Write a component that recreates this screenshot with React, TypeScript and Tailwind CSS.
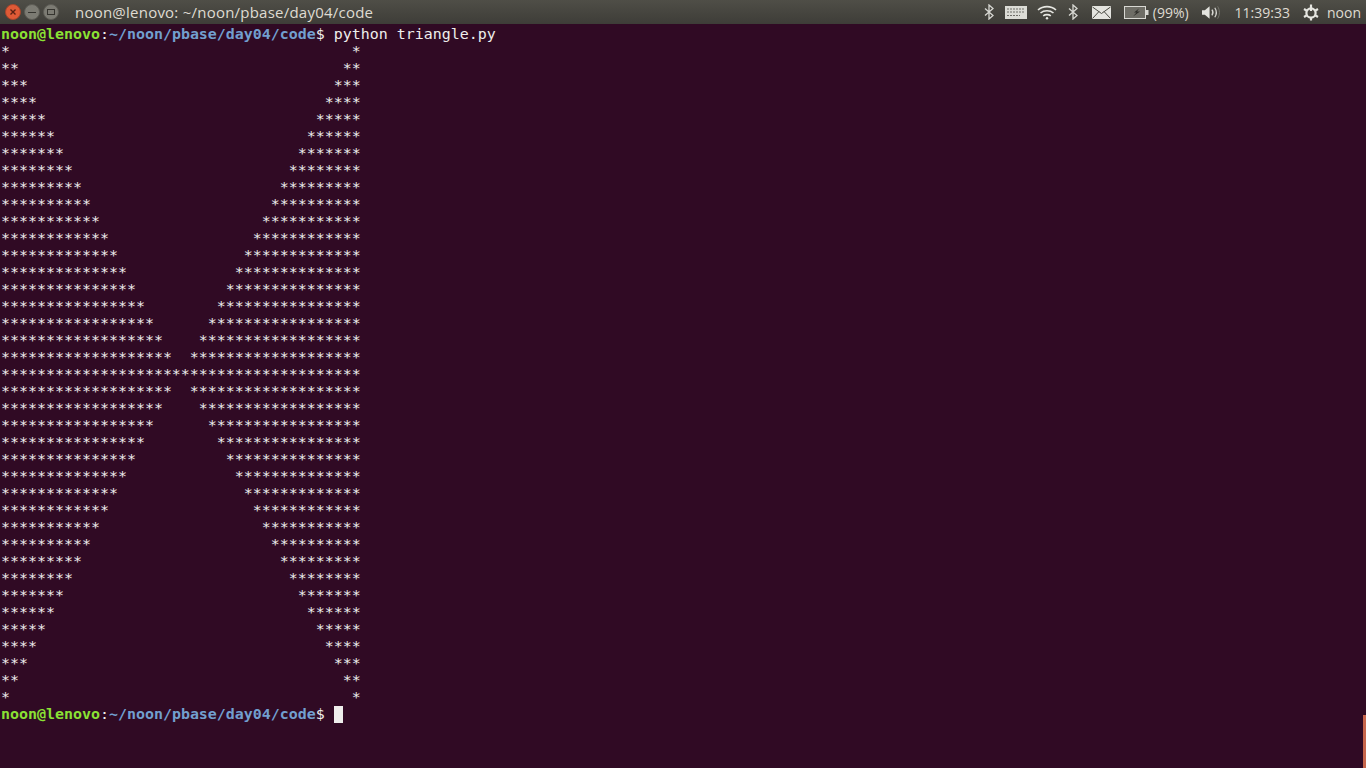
const rowCounts = [...Array.from({ length: 20 }, (_, i) => i + 1), ...Array.from({ length: 19 }, (_, i) => 19 - i)];

function starRow(n: number) {
  return '*'.repeat(n) + ' '.repeat(40 - n * 2) + '*'.repeat(n);
}

function Prompt() {
  return (
    <>
      <span className="font-bold text-[#8ae234]">noon@lenovo</span>
      <span>:</span>
      <span className="font-bold text-[#729fcf]">~/noon/pbase/day04/code</span>
      <span>$ </span>
    </>
  );
}

function WindowButtons() {
  return (
    <div className="flex items-center gap-[3px] pl-[5px] w-[75px]">
      <div className="w-4 h-4 rounded-full bg-[#df5a36] flex items-center justify-center border border-[#a8452c]">
        <svg width="8" height="8" viewBox="0 0 8 8" stroke="#5a2114" strokeWidth="1.4">
          <path d="M1.5 1.5l5 5M6.5 1.5l-5 5" />
        </svg>
      </div>
      <div className="w-4 h-4 rounded-full bg-[#7c7b73] flex items-center justify-center border border-[#5d5c55]">
        <div className="w-2 h-px bg-[#35342f]" />
      </div>
      <div className="w-4 h-4 rounded-full bg-[#7c7b73] flex items-center justify-center border border-[#5d5c55]">
        <div className="w-2 h-[6px] border border-[#35342f]" />
      </div>
    </div>
  );
}

function Bluetooth() {
  return (
    <svg width="10" height="16" viewBox="0 0 10 16" fill="none" stroke="#d8d8d3" strokeWidth="1.3">
      <path d="M1 4.5l8 7-4 3.5V1l4 3.5-8 7" />
    </svg>
  );
}

function Keyboard() {
  return (
    <svg width="22" height="13" viewBox="0 0 22 13">
      <rect x="0" y="0" width="22" height="13" fill="#dcdcd6" />
      <path d="M2 3h18M2 6h18M2 9.500h13" stroke="#6f6e68" strokeWidth="1" strokeDasharray="2 1" />
    </svg>
  );
}

function Wifi() {
  return (
    <svg width="20" height="15" viewBox="0 0 20 15" fill="none" stroke="#e6e6e1" strokeWidth="1.6">
      <path d="M1 5c5-4.500 13-4.500 18 0M3.500 8c3.500-3 9.500-3 13 0M6.200 10.800c2-1.600 5.600-1.600 7.600 0" />
      <circle cx="10" cy="13.300" r="1.200" fill="#e6e6e1" stroke="none" />
    </svg>
  );
}

function Mail() {
  return (
    <svg width="19" height="13" viewBox="0 0 19 13">
      <rect width="19" height="13" fill="#e4e4df" />
      <path d="M0.500 1l9 6.500 9-6.500M0.500 12.500l6.500-7M18.500 12.500l-6.500-7" fill="none" stroke="#4a4942" strokeWidth="1" />
    </svg>
  );
}

function Battery() {
  return (
    <svg width="25" height="13" viewBox="0 0 25 13">
      <rect x="0.500" y="0.500" width="21" height="12" fill="#6e6d66" stroke="#d8d8d3" />
      <rect x="22" y="4" width="2.500" height="5" fill="#d8d8d3" />
      <path d="M15 2.500l-5 4h2.500l-3.500 4 7-5h-3z" fill="#2f2e2a" />
    </svg>
  );
}

function Volume() {
  return (
    <svg width="18" height="15" viewBox="0 0 19 15" fill="none">
      <path d="M0 5h3l5-4v13l-5-4H0z" fill="#e4e4df" />
      <path d="M10.500 4.500c1.300 1.800 1.300 4.200 0 6" stroke="#d8d8d3" strokeWidth="1.400" />
      <path d="M13.500 2.500c2 3 2 7 0 10" stroke="#d8d8d3" strokeWidth="1.300" />
      <path d="M16.500 1c2.500 4 2.500 9 0 13" stroke="#77766e" strokeWidth="1" />
    </svg>
  );
}

function Gear() {
  return (
    <svg width="16" height="17" viewBox="0 0 16 17" fill="none" stroke="#e6e6e1">
      <circle cx="8" cy="9" r="4.600" strokeWidth="2.200" />
      <path d="M8 0.500v6.500" strokeWidth="2.200" />
      <path d="M1 5l2.500 1.500M15 5l-2.500 1.500M1 13l2.500-1.500M15 13l-2.500-1.500M8 13.500v3" strokeWidth="2.200" />
    </svg>
  );
}

export default function App() {
  return (
    <div className="relative w-[1366px] h-[768px] overflow-hidden bg-[#300a24]">
      {/* top panel with the window title merged in */}
      <div className="h-6 flex items-center bg-gradient-to-b from-[#4f4e47] to-[#3e3d38] font-['Open_Sans',sans-serif] text-[14px] text-[#dfdbd2]">
        <WindowButtons />
        <div className="flex-1 text-[15px] tracking-[0.23px]">noon@lenovo: ~/noon/pbase/day04/code</div>
        <div className="flex items-center">
          <div className="w-[17px] flex justify-center"><Bluetooth /></div>
          <div className="ml-[7px]"><Keyboard /></div>
          <div className="ml-[10px]"><Wifi /></div>
          <div className="ml-[11px]"><Bluetooth /></div>
          <div className="ml-[14px]"><Mail /></div>
          <div className="ml-[13px]"><Battery /></div>
          <div className="ml-[4px]">(99%)</div>
          <div className="ml-[13px]"><Volume /></div>
          <div className="ml-[15px]">11:39:33</div>
          <div className="ml-[13px]"><Gear /></div>
          <div className="ml-[8px] mr-[5px]">noon</div>
        </div>
      </div>

      {/* terminal body */}
      <div className="pt-[2px] pl-px font-['DejaVu_Sans_Mono',monospace] text-[14.95px] leading-[17px] text-[#eeeeec] whitespace-pre">
        <div className="h-[17px]">
          <Prompt />
          <span>python triangle.py</span>
        </div>
        {rowCounts.map((n, i) => (
          <div key={i} className="h-[17px]">{starRow(n)}</div>
        ))}
        <div className="h-[17px] flex">
          <Prompt />
          <div className="w-[9px] h-[17px] bg-[#eeeeec]" />
        </div>
      </div>

      {/* scrollbar sliver at the edge */}
      <div className="absolute right-0 top-[715px] bottom-0 w-[3px] bg-[#c7664c]" />
    </div>
  );
}
